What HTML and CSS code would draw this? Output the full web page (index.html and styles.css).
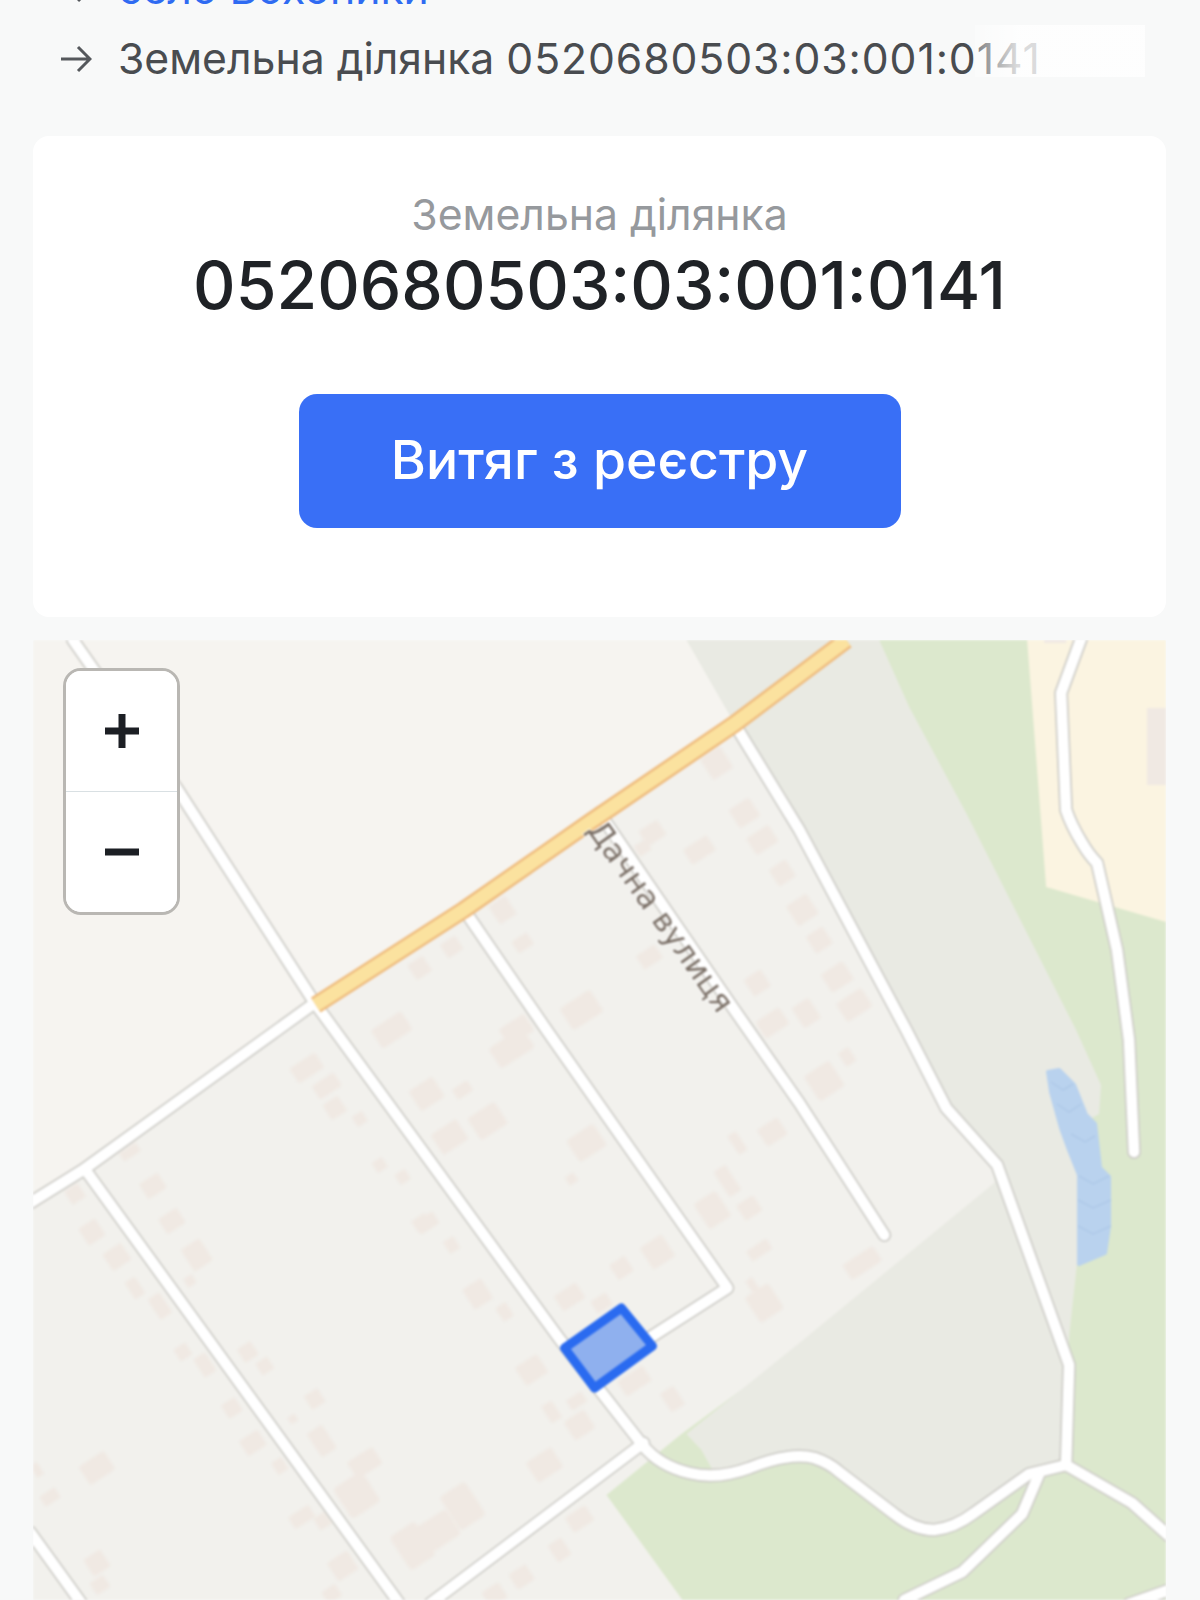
FILE: index.html
```html
<!DOCTYPE html>
<html lang="uk">
<head>
<meta charset="utf-8">
<title>Земельна ділянка 0520680503:03:001:0141</title>
<link rel="stylesheet" href="styles.css">
</head>
<body>
<div class="page">
  <nav class="crumbs">
    <div class="crumb">
      <svg class="arrow" viewBox="0 0 32 28"><path d="M1 14H30M18 2L30 14L18 26"/></svg>
      <a class="crumb-link">село Вохоники</a>
    </div>
    <div class="crumb">
      <svg class="arrow" viewBox="0 0 32 28"><path d="M1 14H30M18 2L30 14L18 26"/></svg>
      <span>Земельна ділянка <span class="crumb-num">0520680503:03:001:0141</span></span>
    </div>
    <div class="watermark"></div>
  </nav>
  <section class="card">
    <div class="card-label">Земельна ділянка</div>
    <h1 class="card-number">0520680503:03:001:0141</h1>
    <button class="cta">Витяг з реєстру</button>
  </section>
  <section class="map">
    <svg class="map-svg" viewBox="33 640 1134 960" preserveAspectRatio="none">
      <defs>
        <rect id="b" x="-.5" y="-.5" width="1" height="1" rx=".12"/>
      </defs>
      <rect class="land-plain" x="33" y="640" width="1134" height="960"/>
      <polygon class="land-res" points="33,1201 315,1003 464,910 592,821 735,724 800,830 907,1030 947,1108 998,1165 995,1183 800,1343 687,1434 607,1495 683,1600 33,1600"/>
      <polygon class="land-green" points="880,640 1167,640 1167,1600 683,1600 607,1495 682,1434 1000,1200"/>
      <polygon class="land-yellow" points="1028,640 1167,640 1167,922 1047,887"/>
      <polygon class="land-grey" points="687,640 880,640 910,707 967,813 1077,1030 1102,1085 1100,1114 1087,1121 1078,1263 1070,1337 1067,1465 970,1515 943,1530 900,1519 837,1470 813,1457 750,1470 717,1477 702,1450 687,1434 800,1343 995,1183 998,1165 947,1108 907,1030 737,727"/>
      <rect class="bld" x="1148" y="708" width="19" height="77"/>
      <rect class="bld" x="1045" y="640" width="22" height="3"/>
      <polygon class="river" points="1049,1072 1060,1070 1075,1085 1087,1115 1096,1124 1101,1168 1110,1177 1110,1226 1106,1253 1080,1264 1080,1175 1070,1150 1062,1128 1052,1092"/>
      <path class="river-line" d="M1052 1082l12 8 10-6M1058 1104l12 8 12-8M1072 1134l14 8 10-6M1080 1176l14 8 16-8M1079 1200l15 8 18-8M1079 1226l15 8 18-8"/>
      <g class="blds">
        <use href="#b" transform="translate(717 763) rotate(-33) scale(24 26)"/>
        <use href="#b" transform="translate(745 813) rotate(-33) scale(24 22)"/>
        <use href="#b" transform="translate(763 840) rotate(-33) scale(26 20)"/>
        <use href="#b" transform="translate(783 873) rotate(-33) scale(20 20)"/>
        <use href="#b" transform="translate(653 833) rotate(-33) scale(22 18)"/>
        <use href="#b" transform="translate(700 850) rotate(-33) scale(28 18)"/>
        <use href="#b" transform="translate(643 848) rotate(-33) scale(14 12)"/>
        <use href="#b" transform="translate(803 910) rotate(-33) scale(24 24)"/>
        <use href="#b" transform="translate(503 910) rotate(-33) scale(20 22)"/>
        <use href="#b" transform="translate(523 943) rotate(-33) scale(18 14)"/>
        <use href="#b" transform="translate(452 947) rotate(-33) scale(18 16)"/>
        <use href="#b" transform="translate(420 968) rotate(-33) scale(18 18)"/>
        <use href="#b" transform="translate(582 1010) rotate(-33) scale(36 26)"/>
        <use href="#b" transform="translate(650 957) rotate(-33) scale(22 16)"/>
        <use href="#b" transform="translate(758 983) rotate(-33) scale(20 20)"/>
        <use href="#b" transform="translate(773 1023) rotate(-33) scale(28 20)"/>
        <use href="#b" transform="translate(517 1030) rotate(-33) scale(30 20)"/>
        <use href="#b" transform="translate(392 1030) rotate(-33) scale(36 22)"/>
        <use href="#b" transform="translate(307 1068) rotate(-33) scale(30 18)"/>
        <use href="#b" transform="translate(327 1086) rotate(-33) scale(26 16)"/>
        <use href="#b" transform="translate(335 1108) rotate(-33) scale(18 18)"/>
        <use href="#b" transform="translate(360 1119) rotate(-33) scale(12 12)"/>
        <use href="#b" transform="translate(380 1165) rotate(-33) scale(12 12)"/>
        <use href="#b" transform="translate(403 1177) rotate(-33) scale(12 12)"/>
        <use href="#b" transform="translate(422 1223) rotate(-33) scale(16 14)"/>
        <use href="#b" transform="translate(130 1152) rotate(-33) scale(20 10)"/>
        <use href="#b" transform="translate(153 1186) rotate(-33) scale(22 18)"/>
        <use href="#b" transform="translate(172 1221) rotate(-33) scale(22 18)"/>
        <use href="#b" transform="translate(197 1255) rotate(-33) scale(22 26)"/>
        <use href="#b" transform="translate(190 1281) rotate(-33) scale(10 10)"/>
        <use href="#b" transform="translate(75 1194) rotate(-33) scale(16 16)"/>
        <use href="#b" transform="translate(92 1232) rotate(-33) scale(20 20)"/>
        <use href="#b" transform="translate(117 1257) rotate(-33) scale(22 20)"/>
        <use href="#b" transform="translate(135 1288) rotate(-33) scale(12 20)"/>
        <use href="#b" transform="translate(160 1306) rotate(-33) scale(14 24)"/>
        <use href="#b" transform="translate(183 1352) rotate(-33) scale(14 14)"/>
        <use href="#b" transform="translate(205 1365) rotate(-33) scale(14 22)"/>
        <use href="#b" transform="translate(248 1352) rotate(-33) scale(16 16)"/>
        <use href="#b" transform="translate(265 1366) rotate(-33) scale(14 14)"/>
        <use href="#b" transform="translate(232 1408) rotate(-33) scale(16 16)"/>
        <use href="#b" transform="translate(253 1443) rotate(-33) scale(22 18)"/>
        <use href="#b" transform="translate(280 1466) rotate(-33) scale(12 14)"/>
        <use href="#b" transform="translate(315 1399) rotate(-33) scale(16 16)"/>
        <use href="#b" transform="translate(293 1419) rotate(-33) scale(8 8)"/>
        <use href="#b" transform="translate(322 1441) rotate(-33) scale(18 28)"/>
        <use href="#b" transform="translate(365 1463) rotate(-33) scale(30 20)"/>
        <use href="#b" transform="translate(357 1495) rotate(-33) scale(34 36)"/>
        <use href="#b" transform="translate(302 1517) rotate(-33) scale(24 14)"/>
        <use href="#b" transform="translate(323 1521) rotate(-33) scale(14 14)"/>
        <use href="#b" transform="translate(343 1566) rotate(-33) scale(24 22)"/>
        <use href="#b" transform="translate(97 1468) rotate(-33) scale(30 22)"/>
        <use href="#b" transform="translate(50 1497) rotate(-33) scale(18 12)"/>
        <use href="#b" transform="translate(37 1470) rotate(-33) scale(8 14)"/>
        <use href="#b" transform="translate(97 1563) rotate(-33) scale(20 20)"/>
        <use href="#b" transform="translate(100 1585) rotate(-33) scale(16 14)"/>
        <use href="#b" transform="translate(332 1594) rotate(-33) scale(16 14)"/>
        <use href="#b" transform="translate(512 1048) rotate(-33) scale(40 24)"/>
        <use href="#b" transform="translate(427 1094) rotate(-33) scale(28 24)"/>
        <use href="#b" transform="translate(463 1090) rotate(-33) scale(18 12)"/>
        <use href="#b" transform="translate(450 1137) rotate(-33) scale(30 24)"/>
        <use href="#b" transform="translate(488 1121) rotate(-33) scale(32 26)"/>
        <use href="#b" transform="translate(587 1143) rotate(-33) scale(32 26)"/>
        <use href="#b" transform="translate(572 1179) rotate(-33) scale(10 10)"/>
        <use href="#b" transform="translate(427 1223) rotate(-33) scale(22 14)"/>
        <use href="#b" transform="translate(452 1245) rotate(-33) scale(12 14)"/>
        <use href="#b" transform="translate(478 1294) rotate(-33) scale(22 24)"/>
        <use href="#b" transform="translate(505 1312) rotate(-33) scale(12 16)"/>
        <use href="#b" transform="translate(570 1297) rotate(-33) scale(26 18)"/>
        <use href="#b" transform="translate(602 1303) rotate(-33) scale(18 14)"/>
        <use href="#b" transform="translate(622 1268) rotate(-33) scale(18 18)"/>
        <use href="#b" transform="translate(658 1252) rotate(-33) scale(26 26)"/>
        <use href="#b" transform="translate(738 1143) rotate(-33) scale(10 22)"/>
        <use href="#b" transform="translate(773 1132) rotate(-33) scale(24 20)"/>
        <use href="#b" transform="translate(728 1181) rotate(-33) scale(14 30)"/>
        <use href="#b" transform="translate(713 1210) rotate(-33) scale(26 30)"/>
        <use href="#b" transform="translate(750 1208) rotate(-33) scale(20 18)"/>
        <use href="#b" transform="translate(760 1250) rotate(-33) scale(24 12)"/>
        <use href="#b" transform="translate(765 1303) rotate(-33) scale(28 30)"/>
        <use href="#b" transform="translate(753 1285) rotate(-33) scale(8 14)"/>
        <use href="#b" transform="translate(635 1381) rotate(-33) scale(30 18)"/>
        <use href="#b" transform="translate(673 1399) rotate(-33) scale(16 22)"/>
        <use href="#b" transform="translate(532 1370) rotate(-33) scale(26 22)"/>
        <use href="#b" transform="translate(552 1412) rotate(-33) scale(12 20)"/>
        <use href="#b" transform="translate(577 1401) rotate(-33) scale(18 12)"/>
        <use href="#b" transform="translate(580 1425) rotate(-33) scale(24 22)"/>
        <use href="#b" transform="translate(545 1465) rotate(-33) scale(30 24)"/>
        <use href="#b" transform="translate(463 1506) rotate(-33) scale(30 40)"/>
        <use href="#b" transform="translate(437 1532) rotate(-33) scale(40 30)"/>
        <use href="#b" transform="translate(413 1546) rotate(-33) scale(30 40)"/>
        <use href="#b" transform="translate(580 1519) rotate(-33) scale(24 18)"/>
        <use href="#b" transform="translate(560 1550) rotate(-33) scale(16 20)"/>
        <use href="#b" transform="translate(522 1577) rotate(-33) scale(20 18)"/>
        <use href="#b" transform="translate(495 1595) rotate(-33) scale(20 18)"/>
        <use href="#b" transform="translate(825 1081) rotate(-33) scale(30 30)"/>
        <use href="#b" transform="translate(848 1057) rotate(-33) scale(12 16)"/>
        <use href="#b" transform="translate(863 1263) rotate(-33) scale(36 18)"/>
        <use href="#b" transform="translate(820 940) rotate(-33) scale(20 20)"/>
        <use href="#b" transform="translate(838 977) rotate(-33) scale(26 22)"/>
        <use href="#b" transform="translate(855 1005) rotate(-33) scale(30 22)"/>
        <use href="#b" transform="translate(807 1013) rotate(-33) scale(20 24)"/>
      </g>
      <g class="road-case">
        <path id="r1" d="M73 640L178 790L315 1003L560 1339L600 1390L643 1445Q660 1466 690 1473Q717 1480 750 1468Q790 1452 815 1458Q830 1463 840 1472L895 1514Q915 1530 935 1530Q955 1528 975 1513L1030 1474L1067 1465"/>
        <path id="r2" d="M737 727L800 830L907 1030L947 1108L998 1165L1070 1365L1067 1465L1133 1503L1170 1536"/>
        <path id="r3" d="M1040 1474L1023 1514L963 1572L905 1600"/>
        <path id="r4" d="M1130 1604L1170 1590"/>
        <path id="r5" d="M600 813L733 1007L800 1103L885 1235"/>
        <path id="r6" d="M468 915L547 1030L728 1288L600 1370"/>
        <path id="r7" d="M315 1003L83 1170L30 1203"/>
        <path id="r8" d="M87 1172L400 1604"/>
        <path id="r9" d="M30 1532L82 1604"/>
        <path id="r10" d="M644 1443L430 1604"/>
        <path id="r11" d="M1083 636L1062 693L1067 810Q1072 825 1083 843Q1090 855 1098 863L1118 950L1130 1040L1135 1152"/>
      </g>
      <g class="road-fill">
        <use href="#r1"/><use href="#r2"/><use href="#r3"/><use href="#r4"/><use href="#r5"/><use href="#r6"/><use href="#r7"/><use href="#r8"/><use href="#r9"/><use href="#r10"/><use href="#r11"/>
      </g>
      <path class="main-case" d="M316 1005L464 910L592 821L735 724L847 640"/>
      <path class="main-fill" d="M316 1005L464 910L592 821L735 724L847 640"/>
      <polygon class="parcel" points="622,1308 653,1346 595,1388 565,1348"/>
      <text class="street" transform="translate(587 830) rotate(54.5)">Дачна вулиця</text>
    </svg>
    <div class="zoom">
      <button class="zoom-btn" aria-label="zoom in"><svg class="zoom-ico" viewBox="0 0 34 34"><path d="M0 17H34M17 0V34"/></svg></button>
      <button class="zoom-btn" aria-label="zoom out"><svg class="zoom-ico" viewBox="0 0 34 34"><path d="M0 17H34"/></svg></button>
    </div>
  </section>
</div>
</body>
</html>
```
FILE: styles.css
```css
* { box-sizing: border-box; }
html, body { margin: 0; padding: 0; }
body {
  width: 1200px;
  height: 1600px;
  overflow: hidden;
  background: #f8f9f9;
  font-family: Inter, "Liberation Sans", sans-serif;
}
.page { display: flex; flex-direction: column; margin-top: -39px; }
.crumbs { position: relative; display: flex; flex-direction: column; gap: 14px; padding-left: 60px; height: 155px; }
.crumb { display: flex; align-items: center; gap: 26px; height: 56px; font-size: 42.7px; line-height: 56px; color: #494c50; white-space: nowrap; }
.crumb-num { letter-spacing: .9px; }
.crumb-link { color: #2f6bf2; }
.arrow { width: 32px; height: 28px; flex: none; fill: none; stroke: #55585c; stroke-width: 3; }
.watermark { position: absolute; left: 975px; top: 64px; width: 170px; height: 52px; background: linear-gradient(90deg, rgba(255,255,255,.3), rgba(255,255,255,.8) 25%); }
.card {
  margin: 20px 34px 0 33px;
  height: 481px;
  background: #fff;
  border-radius: 16px;
  display: flex;
  flex-direction: column;
  align-items: center;
  padding-top: 51px;
}
.card-label { font-size: 42.7px; line-height: 56px; color: #96999d; }
.card-number { margin: 0; font-size: 66px; line-height: 84px; font-weight: 500; color: #1f2226; white-space: nowrap; }
.cta {
  margin-top: 67px;
  width: 602px;
  height: 134px;
  padding: 0 0 4px;
  border: 0;
  border-radius: 18px;
  background: #396ff6;
  color: #fff;
  font: 500 53.5px Inter, "Liberation Sans", sans-serif;
}
.map { position: relative; margin: 23px 34px 0 33px; height: 960px; overflow: hidden; }
.map-svg { display: block; width: 100%; height: 100%; filter: blur(.8px); }
.land-plain { fill: #f6f4f0; }
.land-res { fill: #f2f1ed; }
.land-green { fill: #dce8cd; }
.land-yellow { fill: #fbf4e1; }
.land-grey { fill: #e9eae3; }
.bld, .blds { fill: #f0e9e3; }
.blds { filter: blur(1.2px); }
.river { fill: #b9d2ee; stroke: #b9d2ee; stroke-width: 4; stroke-linejoin: round; }
.river-line { fill: none; stroke: #afc9e8; stroke-width: 1.5; }
.road-case, .road-fill { fill: none; stroke-linejoin: round; stroke-linecap: round; }
.road-case { stroke: #cfcec9; stroke-width: 14; }
.road-fill { stroke: #fff; stroke-width: 10.5; }
.main-case { fill: none; stroke: #efbd80; stroke-width: 18; stroke-linejoin: round; }
.main-fill { fill: none; stroke: #fbe29f; stroke-width: 13; stroke-linejoin: round; }
.parcel { fill: #8fb0ee; stroke: #2a6bf0; stroke-width: 9; stroke-linejoin: round; }
.street { font: 31px "DejaVu Sans", sans-serif; fill: #7b7067; stroke: rgba(255,255,255,.7); stroke-width: 2; paint-order: stroke; }
.zoom {
  position: absolute;
  left: 30px;
  top: 28px;
  width: 117px;
  height: 247px;
  display: flex;
  flex-direction: column;
  background: #fff;
  border: 3.5px solid #b9b7b3;
  border-radius: 18px;
  overflow: hidden;
}
.zoom-btn { flex: 1; display: flex; align-items: center; justify-content: center; padding: 0; background: #fff; border: 0; }
.zoom-btn + .zoom-btn { border-top: 1px solid #d9e0e3; }
.zoom-ico { width: 34px; height: 34px; fill: none; stroke: #1c1f24; stroke-width: 7; }
```
